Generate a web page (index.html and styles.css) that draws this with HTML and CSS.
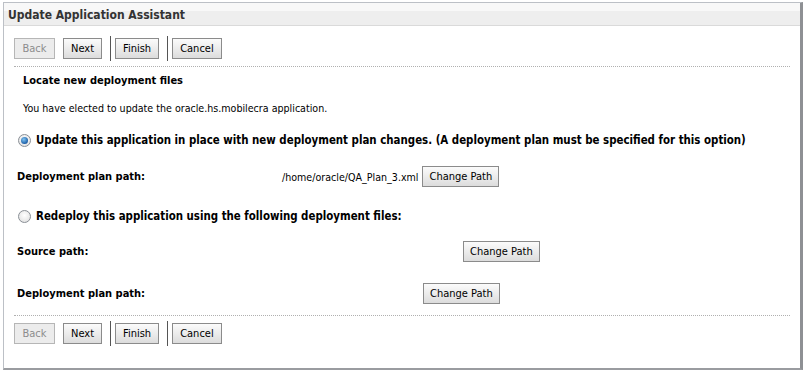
FILE: index.html
```html
<!DOCTYPE html>
<html>
<head>
<meta charset="utf-8">
<link rel="stylesheet" href="styles.css">
</head>
<body>
<div class="window">
  <div class="titlebar">Update Application Assistant</div>
  <div class="content">
    <div class="toolbar">
      <button class="btn disabled">Back</button>
      <button class="btn">Next</button>
      <span class="sep"></span>
      <button class="btn">Finish</button>
      <span class="sep"></span>
      <button class="btn">Cancel</button>
    </div>
    <div class="dots"></div>
    <div class="section">
      <div class="heading">Locate new deployment files</div>
      <div class="intro">You have elected to update the oracle.hs.mobilecra application.</div>
      <div class="option">
        <span class="radio checked"></span>
        <span class="optlabel">Update this application in place with new deployment plan changes. (A deployment plan must be specified for this option)</span>
      </div>
      <div class="field f1">
        <span class="flabel">Deployment plan path:</span>
        <span class="fvalue"><span class="path">/home/oracle/QA_Plan_3.xml</span><button class="btn cp">Change Path</button></span>
      </div>
      <div class="option o2">
        <span class="radio"></span>
        <span class="optlabel">Redeploy this application using the following deployment files:</span>
      </div>
      <div class="field f2">
        <span class="flabel">Source path:</span>
        <span class="fvalue v2"><button class="btn cp">Change Path</button></span>
      </div>
      <div class="field f3">
        <span class="flabel">Deployment plan path:</span>
        <span class="fvalue v3"><button class="btn cp">Change Path</button></span>
      </div>
    </div>
    <div class="dots d2"></div>
    <div class="toolbar tb2">
      <button class="btn disabled">Back</button>
      <button class="btn">Next</button>
      <span class="sep"></span>
      <button class="btn">Finish</button>
      <span class="sep"></span>
      <button class="btn">Cancel</button>
    </div>
  </div>
</div>
</body>
</html>
```
FILE: styles.css
```css
html, body { margin: 0; padding: 0; background: #ffffff; }
body {
  font-family: Tahoma, "DejaVu Sans Condensed", "Liberation Sans", sans-serif;
  font-size: 10.6px;
  color: #000;
}
.window {
  margin: 2px 0 0 3px;
  width: 800px;
  height: 368px;
  border: 1px solid #bcc0c6;
  border-right: 3px solid #8e9094;
  border-bottom: 2px solid #9a9ca0;
  box-sizing: border-box;
  background: #fff;
}
.titlebar {
  height: 22px;
  line-height: 24px;
  padding-left: 4px;
  font-weight: bold;
  font-size: 12px;
  color: #333333;
  background: linear-gradient(#f8f8f8 0, #f8f8f8 8px, #eeeeee 8px, #eeeeee 100%);
  border-bottom: 1px solid #dadada;
}
.content { padding: 0 0 0 10px; }
.toolbar {
  display: flex;
  align-items: center;
  height: 25px;
  margin-top: 10px;
}
.btn {
  font-family: inherit;
  font-size: 11px;
  height: 21px;
  padding: 0 7px;
  margin: 0;
  color: #000;
  background: linear-gradient(#fbfbfb, #ececec 50%, #dcdcdc);
  border: 1px solid #8b8b8b;
  border-radius: 0;
  box-sizing: border-box;
}
.toolbar .btn { margin-right: 8px; }
.btn.disabled {
  color: #8c8c8c;
  border-color: #b6b6b6;
  background: #ececec;
  min-width: 41px;
}
.sep {
  width: 1px;
  height: 25px;
  background: #555;
  margin: 0 4px 0 0;
}
.dots {
  height: 0;
  border-top: 1px dotted #b0b0b0;
  width: 776px;
  margin-top: 5px;
}
.dots.d2 { margin-top: 11px; }
.tb2 { margin-top: 5px; }
.section { padding-top: 6px; }
.heading {
  font-weight: bold;
  font-size: 11px;
  padding-left: 9px;
  height: 16px;
  line-height: 16px;
}
.intro {
  padding-left: 9px;
  margin-top: 11px;
  height: 16px;
  line-height: 16px;
}
.option {
  display: flex;
  align-items: center;
  margin-top: 15px;
  padding-left: 4px;
  height: 18px;
  font-weight: bold;
  font-size: 11.4px;
}
.radio {
  width: 11px;
  height: 11px;
  border-radius: 50%;
  border: 1px solid #8a8f96;
  background: radial-gradient(circle at 50% 40%, #ffffff, #dcdcdc);
  margin-right: 5px;
  position: relative;
  flex: none;
}
.radio.checked::after {
  content: "";
  position: absolute;
  left: 2px; top: 2px;
  width: 7px; height: 7px;
  border-radius: 50%;
  background: radial-gradient(circle at 40% 35%, #7fc4f2, #1d5fa8 70%, #173e74);
}
.field {
  display: flex;
  align-items: center;
  height: 21px;
  margin-top: 18px;
  padding-left: 3px;
}
.flabel {
  font-weight: bold;
  font-size: 11px;
  width: 265px;
  flex: none;
}
.fvalue { display: flex; align-items: center; }
.path { margin-right: 4px; }
.cp { padding: 0 6px; }
.f1 { margin-top: 17px; }
.o2 { margin-top: 20px; }
.f2 { margin-top: 16px; }
.v2 { margin-left: 181px; }
.f3 { margin-top: 21px; }
.v3 { margin-left: 141px; }
```
